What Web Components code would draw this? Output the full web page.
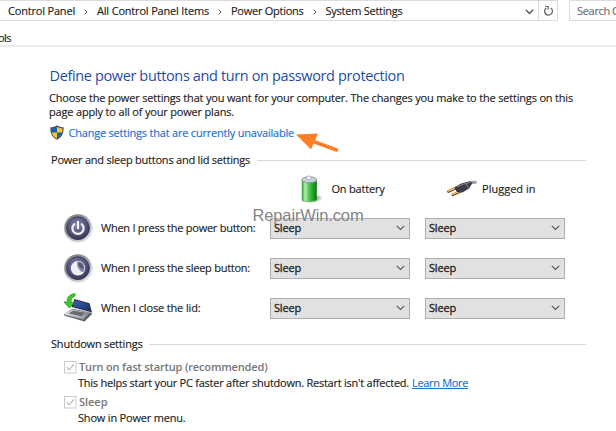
<!DOCTYPE html>
<html lang="en"><head><meta charset="utf-8"><title>System Settings</title>
<style>
html,body{margin:0;width:616px;height:431px;overflow:hidden;background:#fff}
body{font:11px/14px "Open Sans","Noto Sans",sans-serif;color:#1c1c1c;-webkit-text-stroke:.15px}
</style></head><body>
<power-page></power-page>
<script>
const define=(name,html,after)=>customElements.define(name,class extends HTMLElement{
  connectedCallback(){
    if(this.shadowRoot)return;
    this.attachShadow({mode:'open'}).innerHTML=html;
    if(after)after(this);
  }
});

/* One line of text whose tracking is set so that it fills the width given in "w". */
define('fit-text',`<style>:host{display:block;white-space:nowrap;flex:none}span{display:inline-block;text-decoration:var(--deco,none)}</style><span><slot></slot></span>`,el=>{
  const w=+el.getAttribute('w'),s=el.shadowRoot.querySelector('span');
  el.style.width=w+'px';
  s.style.letterSpacing=((w-s.getBoundingClientRect().width)/el.textContent.length)+'px';
});

define('drop-down',`<style>
:host{display:flex;box-sizing:border-box;width:140px;height:21px;border:1px solid #adadad;background:#e1e1e1;align-items:center;justify-content:space-between;padding:0 4px 0 3px;-webkit-text-stroke:.3px #222}
svg{width:9px;height:6px}</style><fit-text w="27">Sleep</fit-text>
<svg viewBox="0 0 9 6"><path d="M.8.8 4.5 4.5 8.2.8" fill="none" stroke="#5a5a5a" stroke-width="1.2"/></svg>`);

define('section-title',`<style>:host{display:flex;align-items:center;height:14px;gap:6.5px;margin-left:51px;width:535px}
i{flex:1;height:1px;background:#d9d9d9;margin-top:1px}</style><slot></slot><i></i>`);

define('address-bar',`<style>
:host{display:flex;height:21px;box-sizing:border-box;align-items:stretch}
.path{display:flex;align-items:center;width:558px;box-sizing:border-box;border:solid #dcdcdc;border-width:1px 1px 1px 0;padding-left:8px}
.sep{width:22px;display:flex;justify-content:center;padding-top:2px}
.drop{margin-left:auto;width:18px;display:flex;padding-top:2px;justify-content:center}
.re{width:18px;display:flex;align-items:center;justify-content:center;border-left:1px solid #dcdcdc;align-self:stretch}
.search{margin-left:11px;flex:1;border:solid #dcdcdc;border-width:1px 0 1px 1px;padding-left:7px;gap:2px;display:flex;align-items:center;color:#707070;overflow:hidden}
</style>
<div class="path"><fit-text w="67">Control Panel</fit-text><span class="sep"><svg width="4" height="6"><path d="M.6.6 3 3 .6 5.4" fill="none" stroke="#555"/></svg></span>
<fit-text w="112">All Control Panel Items</fit-text><span class="sep"><svg width="4" height="6"><path d="M.6.6 3 3 .6 5.4" fill="none" stroke="#555"/></svg></span>
<fit-text w="72.5">Power Options</fit-text><span class="sep"><svg width="4" height="6"><path d="M.6.6 3 3 .6 5.4" fill="none" stroke="#555"/></svg></span>
<fit-text w="77">System Settings</fit-text>
<span class="drop"><svg width="9" height="6"><path d="M.8.8 4.5 4.5 8.2.8" fill="none" stroke="#555" stroke-width="1.4"/></svg></span>
<span class="re"><svg width="11" height="12" viewBox="0 0 11 12"><path d="M7.9 3.1A3.9 3.9 0 1 1 3.3 3" fill="none" stroke="#666" stroke-width="1.3"/><path d="M2.2 1.5h3v3.2" fill="none" stroke="#666" stroke-width="1.2"/></svg></span></div>
<div class="search"><fit-text w="33">Search</fit-text><span>C</span></div>`);

define('round-icon',`<style>:host{display:block;width:30px;height:30px}</style>
<svg width="30" height="30" viewBox="0 0 30 30"><defs>
<radialGradient id="g" cx=".45" cy=".35" r=".7"><stop offset="0" stop-color="#8587a8"/><stop offset=".5" stop-color="#5a5b80"/><stop offset="1" stop-color="#30304f"/></radialGradient>
<linearGradient id="r" x2=".8" y2="1"><stop offset="0" stop-color="#777"/><stop offset=".5" stop-color="#999aa6"/><stop offset="1" stop-color="#dddde6"/></linearGradient></defs>
<circle cx="15.2" cy="15.5" r="14.5" fill="#bbb" opacity=".3"/><circle cx="15" cy="15" r="13.7" fill="url(#r)"/><circle cx="15" cy="15.2" r="11.4" fill="url(#g)" stroke="#343450" stroke-width=".8"/>
<g id="sym"></g></svg>`,el=>{
  el.shadowRoot.getElementById('sym').innerHTML=el.getAttribute('kind')==='power'
  ?'<path d="M11.2 11.2a5.6 5.6 0 1 0 7.6 0" fill="none" stroke="#f4f4f8" stroke-width="2.2" stroke-linecap="round"/><path d="M15 8.8v6.4" stroke="#f4f4f8" stroke-width="2.2" stroke-linecap="round"/>'
  :'<circle cx="15" cy="15.3" r="7.2" fill="#efeff5"/><path d="M14.6 8.6C19 8.300 22.200 12 21.600 16.500 20.800 19.500 19 19.600 17.500 18 14.500 15.500 13.200 12 14.600 8.600Z" fill="#8d8ea8"/><path d="M15.300 9.200c3.500.3 5.600 3.500 5 7.200-3.200-.8-5.600-4-5-7.200Z" fill="#55567a"/>';
});

define('lid-icon',`<style>:host{display:block;width:30px;height:30px}</style>
<svg width="30" height="30" viewBox="0 0 30 30"><defs><linearGradient id="s" x2="1" y2="1"><stop stop-color="#3c64b4"/><stop offset="1" stop-color="#1c2f6b"/></linearGradient><linearGradient id="k" x2="1"><stop stop-color="#f3f3f3"/><stop offset="1" stop-color="#777b82"/></linearGradient></defs>
<path d="M1 22.500 21.500 28.500 29 21 28 19 9 16Z" fill="#555b62"/><path d="M1 21.500 9 16.500 27.500 19 20.500 26.500Z" fill="url(#k)" stroke="#8b8e94" stroke-width=".6"/>
<path d="M5.500 20.500 10 17.800 22 19.700 18.500 23.300Z" fill="#666b73"/>
<path d="M8.500 14 11.500 6 26.500 10.300 29 19.500Z" fill="#222936"/><path d="M10 13.500 12 7 25.500 11 27.500 18Z" fill="url(#s)"/><path d="M9 14.500 28.500 19.700" stroke="#c6cad2" stroke-width=".8"/>
<path d="M12 .8C6.500.8 4 4.500 4.200 9.200L1 9 6.300 15 11 10l-3-.5C7.800 6.500 9 4 12 3Z" fill="#3ccc2b" stroke="#168316" stroke-width=".7"/></svg>`);

define('battery-icon',`<style>:host{display:block;width:22px;height:28px}</style>
<svg width="22" height="28" viewBox="0 0 22 28"><defs><linearGradient id="b" x2="1"><stop stop-color="#22952e"/><stop offset=".22" stop-color="#b6f2ae"/><stop offset=".5" stop-color="#43c64a"/><stop offset="1" stop-color="#08780f"/></linearGradient><radialGradient id="h"><stop stop-color="#888"/><stop offset="1" stop-color="#888" stop-opacity="0"/></radialGradient></defs>
<ellipse cx="14" cy="23" rx="8" ry="4" fill="url(#h)"/>
<path d="M.8 5v20c0 3 15 3 15 0V5Z" fill="url(#b)"/><ellipse cx="8.300" cy="4.800" rx="7.500" ry="3" fill="#c9d0d8" stroke="#71817b" stroke-width=".7"/>
<path d="M5.300 4V2c0-1.400 5-1.400 5 0v2c0 1.200-5 1.200-5 0Z" fill="#edf0f7" stroke="#838cab" stroke-width=".6"/><path d="M1.300 25c1 2.200 13 2.200 14 0" fill="none" stroke="#83bd84"/></svg>`);

define('plug-icon',`<style>:host{display:block;width:30px;height:17px}</style>
<svg width="30" height="17" viewBox="0 0 30 17"><path d="M1.500 11.500 10 7.500M6 14.800 14 11" stroke="#6e4c28" stroke-width="2.800" stroke-linecap="round"/><path d="M1.500 11 10 7M6 14.300 14 10.500" stroke="#e9b472" stroke-width="1.600" stroke-linecap="round"/>
<path d="M19 5.500C22 2 25 1.800 29.500 2.500" fill="none" stroke="#a1a1a7" stroke-width="3.200"/><path d="M7.500 7.500 14 3.500 23 1.200 25.500 3 22 8.500 15.500 12.600 10 12Z" fill="#3b3e4a"/><path d="M10 7 15 4.500 23 2.500M19 4l2.500 4" fill="none" stroke="#8b8f9d" stroke-width=".9"/><path d="m8 8 4 4" stroke="#1d1f28"/></svg>`);

define('shield-icon',`<style>:host{display:block;width:14px;height:15px}</style>
<svg width="14" height="15" viewBox="0 0 14 15"><defs><clipPath id="c"><path d="M7 1.800C5 3.100 3 3.400 1.500 3.400 1.300 8.500 3.200 11.600 7 13.500 10.800 11.600 12.700 8.500 12.500 3.400 11 3.400 9 3.100 7 1.800Z"/></clipPath></defs>
<path d="M7 .3C5 1.900 3 2.300.4 2.300.1 9 2.500 12.600 7 14.800c4.500-2.200 6.900-5.800 6.600-12.500C11 2.300 9 1.900 7 .3Z" fill="#474c56"/><g clip-path="url(#c)"><path d="M0 0h7v7.500H0ZM7 7.500h7V15H7Z" fill="#1862b5"/><path d="M7 0h7v7.500H7ZM0 7.500h7V15H0Z" fill="#fcc62d"/></g></svg>`);

define('check-line',`<style>:host{display:flex;height:14px;margin-left:64px;gap:2.500px;align-items:center;color:#767676;font-weight:600;-webkit-text-stroke:0}
svg{flex:none}</style><svg width="12.500" height="13" viewBox="0 0 12.500 13"><rect x=".5" y=".5" width="11.500" height="11.500" fill="#fff" stroke="#c9c9c9"/><path d="m2.700 6.200 2.400 2.600 4.800-5.300" fill="none" stroke="#bbb" stroke-width="1.200"/></svg><slot></slot>`);

define('setting-row',`<style>:host{display:grid;grid-template-columns:38px 169px 155px 140px;margin-left:63px;height:40px;align-items:center}</style>
<slot name="icon"></slot><slot></slot><drop-down></drop-down><drop-down></drop-down>`);

define('power-page',`<style>
:host{display:block;position:relative;width:616px;height:431px;overflow:hidden;background:#fff}
.menu{height:26px;border-bottom:2px solid #ebebeb;box-sizing:border-box;padding:10px 0 0}
.menu fit-text{margin-left:-2px;margin-top:0}
h1{font-size:14.500px;line-height:20px;font-weight:400;color:#1f4ba5;margin:19px 0 0 49.500px;-webkit-text-stroke:0}
.intro{margin:5px 0 0 49px}
.link{display:flex;gap:5px;height:15px;margin:6px 0 0 49.500px;color:#1e70cf;align-items:center}
.heads{display:flex;height:30px;align-items:center;margin:6.500px 0 0 301px}
.heads .a{margin-left:8.500px}.heads plug-icon{margin-left:62px}.heads .b{margin-left:5.500px}
.note{display:flex;margin-left:78px;gap:3px}
.note .more{color:#1e70cf;--deco:underline}
.mark{position:absolute;left:252.500px;top:205px;font:16.500px/20px "Liberation Sans",Arial,sans-serif;color:#858585;-webkit-text-stroke:0;text-shadow:-1px -1px 0 #fff8}
.arrow{position:absolute;left:295px;top:130px}
</style>
<address-bar></address-bar>
<div class="menu"><fit-text w="13">ols</fit-text></div>
<h1><fit-text w="355">Define power buttons and turn on password protection</fit-text></h1>
<div class="intro"><fit-text w="524">Choose the power settings that you want for your computer. The changes you make to the settings on this</fit-text><fit-text w="185">page apply to all of your power plans.</fit-text></div>
<div class="link"><shield-icon></shield-icon><fit-text w="225.500">Change settings that are currently unavailable</fit-text></div>
<section-title style="margin-top:13px"><fit-text w="199">Power and sleep buttons and lid settings</fit-text></section-title>
<div class="heads"><battery-icon></battery-icon><fit-text class="a" w="53">On battery</fit-text><plug-icon></plug-icon><fit-text class="b" w="53.500">Plugged in</fit-text></div>
<div style="margin-top:4.500px">
<setting-row><round-icon slot="icon" kind="power"></round-icon><fit-text w="154.500">When I press the power button:</fit-text></setting-row>
<setting-row><round-icon slot="icon" kind="sleep"></round-icon><fit-text w="149">When I press the sleep button:</fit-text></setting-row>
<setting-row><lid-icon slot="icon"></lid-icon><fit-text w="99.500">When I close the lid:</fit-text></setting-row></div>
<section-title style="margin-top:9px"><fit-text w="91.500">Shutdown settings</fit-text></section-title>
<check-line style="margin-top:9px"><fit-text w="188.500">Turn on fast startup (recommended)</fit-text></check-line>
<div class="note" style="margin-top:2px"><fit-text w="331">This helps start your PC faster after shutdown. Restart isn't affected.</fit-text><fit-text class="more" w="56">Learn More</fit-text></div>
<check-line style="margin-top:5px"><fit-text w="28.500">Sleep</fit-text></check-line>
<div class="note" style="margin-top:2px"><fit-text w="107.500">Show in Power menu.</fit-text></div>
<fit-text class="mark" w="111">RepairWin.com</fit-text>
<svg class="arrow" width="46" height="24"><path d="M13 9.500 41.500 20" stroke="#ff7f27" stroke-width="3.500" stroke-linecap="round"/><path d="M1 4.500 23 3.500 16 19.500Z" fill="#ff7f27"/></svg>`);
</script></body></html>
